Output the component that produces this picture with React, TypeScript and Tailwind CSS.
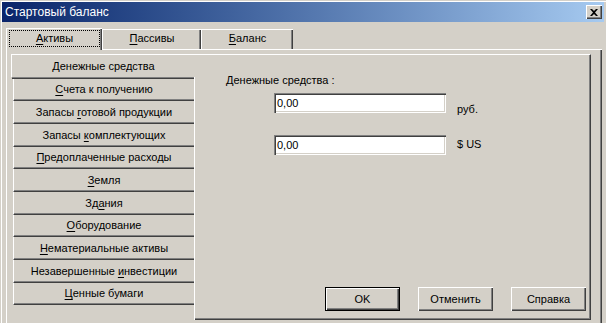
import React from "react";

const raised =
  "shadow-[inset_1px_1px_0_#ffffff,inset_-1px_-1px_0_#404040,inset_-2px_-2px_0_#808080]";
const sunken =
  "shadow-[inset_1px_1px_0_#808080,inset_2px_2px_0_#404040,inset_-1px_-1px_0_#ffffff,inset_-2px_-2px_0_#d4d0c8]";

function Acc({ pre, key_, post }: { pre?: string; key_: string; post?: string }) {
  return (
    <span>
      {pre}
      <span className="underline underline-offset-[2px]">{key_}</span>
      {post}
    </span>
  );
}

const rows: [string, string, string][] = [
  ["", "С", "чета к получению"],
  ["Запасы ", "г", "отовой продукции"],
  ["Запасы ", "к", "омплектующих"],
  ["", "П", "редоплаченные расходы"],
  ["", "З", "емля"],
  ["Зд", "а", "ния"],
  ["", "О", "борудование"],
  ["", "Н", "ематериальные активы"],
  ["Незавершенные ", "и", "нвестиции"],
  ["", "Ц", "енные бумаги"],
];

function WinButton({ label, isDefault }: { label: string; isDefault?: boolean }) {
  return (
    <div
      className={
        "flex h-[24px] w-[75px] items-center justify-center " +
        (isDefault
          ? "border border-black shadow-[inset_1px_1px_0_#ffffff,inset_-1px_-1px_0_#404040,inset_-2px_-2px_0_#808080]"
          : raised)
      }
    >
      {label}
    </div>
  );
}

export default function App() {
  return (
    <div
      className="flex h-[323px] w-[606px] flex-col overflow-hidden bg-[#d4d0c8] text-[11px] leading-[13px] text-black shadow-[inset_1px_1px_0_#d4d0c8,inset_2px_2px_0_#ffffff]"
      style={{ fontFamily: '"Liberation Sans", Arial, sans-serif' }}
    >
      {/* caption */}
      <div className="mx-[2px] mt-[2px] flex h-[20px] items-center justify-between bg-linear-to-r from-[#0a246a] to-[#a6caf0] pl-[3px] pr-[2px]">
        <span className="text-[12px] text-white">Стартовый баланс</span>
        <div className={"flex h-[14px] w-[16px] items-center justify-center bg-[#d4d0c8] " + raised}>
          <svg width="8" height="7" viewBox="0 0 8 7">
            <path d="M0 0h2l2 2 2-2h2L5 3.5 8 7H6L4 5 2 7H0l3-3.5z" fill="#000" />
          </svg>
        </div>
      </div>

      {/* tabs */}
      <div className="ml-[6px] mr-[4px] mt-[6px] flex h-[22px] items-end">
        <div className="h-[22px] w-[96px] border-l border-t border-white shadow-[inset_-1px_0_0_#404040,inset_-2px_0_0_#808080]">
          <div className="ml-[2px] mr-[2px] mt-[1px] flex h-[17px] items-center justify-center border border-dotted border-black">
            <Acc key_="А" post="ктивы" />
          </div>
        </div>
        <div className="flex h-[21px] w-[99px] items-center justify-center border-b border-l border-t border-white pb-[2px] shadow-[inset_-1px_0_0_#404040,inset_-2px_0_0_#808080]">
          <Acc key_="П" post="ассивы" />
        </div>
        <div className="flex h-[21px] w-[92px] items-center justify-center border-b border-l border-t border-white pb-[2px] shadow-[inset_-1px_0_0_#404040,inset_-2px_0_0_#808080]">
          <Acc key_="Б" post="аланс" />
        </div>
        <div className="h-[1px] flex-1 bg-white" />
      </div>

      {/* tab page */}
      <div className="ml-[6px] mr-[4px] flex flex-1 border-l border-r border-l-white border-r-[#404040] pl-[4px] pt-[4px] shadow-[inset_-1px_0_0_#808080]">
        {/* vertical tab list */}
        <div className="flex w-[184px] flex-col">
          <div className="flex h-[23px] items-center justify-center border-l border-t border-white">
            <Acc key_="Д" post="енежные средства" />
          </div>
          <div className="flex h-[243px] flex-col border-r border-white">
            <div className="ml-[1px] h-[2px] border-t border-b border-t-[#808080] border-b-[#404040]" />
            {rows.map(([a, k, b], i) => (
              <div
                key={i}
                className={
                  "ml-[2px] flex items-center justify-center border-b border-l border-b-[#404040] border-l-white shadow-[inset_0_-1px_0_#808080] " +
                  (i % 3 === 0 ? "h-[22px]" : "h-[23px]")
                }
              >
                <Acc pre={a} key_={k} post={b} />
              </div>
            ))}
          </div>
        </div>

        {/* page content */}
        <div className="flex h-[266px] w-[396px] flex-col border-b border-r border-t border-b-[#404040] border-r-[#404040] border-t-white shadow-[inset_-1px_-1px_0_#808080]">
          <div className="ml-[31px] mt-[19px]">Денежные средства :</div>
          <div className="ml-[79px] mt-[6px] flex items-start">
            <div className={"flex h-[20px] w-[172px] items-center bg-white pl-[3px] " + sunken}>0,00</div>
            <span className="ml-[11px] mt-[10px]">руб.</span>
          </div>
          <div className="ml-[79px] mt-[19px] flex items-start">
            <div className={"flex h-[20px] w-[172px] items-center bg-white pl-[3px] " + sunken}>0,00</div>
            <span className="ml-[11px] mt-[3px]">$ US</span>
          </div>
          <div className="mb-[8px] mr-[4px] mt-auto flex justify-end gap-[18px]">
            <WinButton label="OK" isDefault />
            <WinButton label="Отменить" />
            <WinButton label="Справка" />
          </div>
        </div>
      </div>
    </div>
  );
}
